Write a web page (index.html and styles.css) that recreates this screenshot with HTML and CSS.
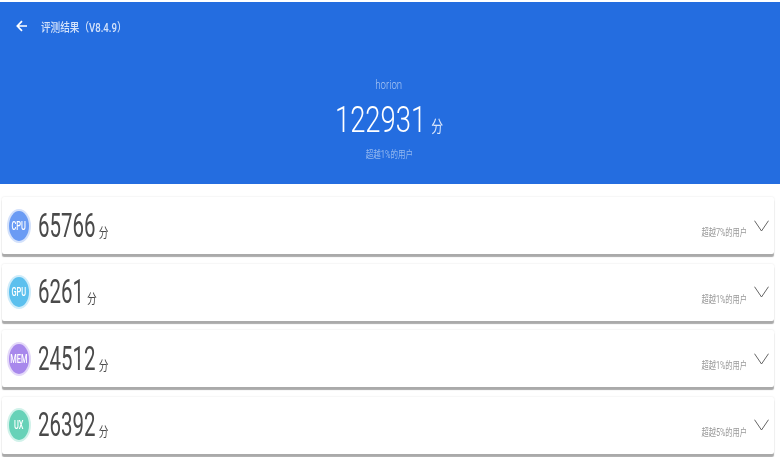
FILE: index.html
```html
<!DOCTYPE html>
<html lang="zh-CN">

<head>
    <meta charset="UTF-8">
    <meta name="viewport" content="width=device-width, initial-scale=1.0">
    <title>评测结果</title>
    <link rel="stylesheet" href="styles.css">
</head>

<body>
    <header class="summary">
        <div class="topbar">
            <svg class="back-icon" width="12" height="12" viewBox="0 0 12 12">
                <path d="M11 6H1.5M6 1.2 1.3 6 6 10.8" fill="none" stroke="#fff" stroke-width="1.7"/>
            </svg>
            <span class="topbar-title">评测结果（V8.4.9）</span>
        </div>
        <div class="device">horion</div>
        <div class="total"><span class="total-num">122931</span><span class="total-unit">分</span></div>
        <div class="total-rank">超越1%的用户</div>
    </header>

    <main class="cards">
        <div class="card">
            <div class="badge badge-cpu"><span>CPU</span></div>
            <div class="score"><span class="score-num">65766</span><span class="score-unit">分</span></div>
            <div class="rank">超越7%的用户</div>
            <svg class="chevron" width="15" height="12" viewBox="0 0 15 12"><path d="M.5.7 7.5 11 14.5.7" fill="none" stroke="#555" stroke-width=".9"/></svg>
        </div>
        <div class="card">
            <div class="badge badge-gpu"><span>GPU</span></div>
            <div class="score"><span class="score-num">6261</span><span class="score-unit">分</span></div>
            <div class="rank">超越1%的用户</div>
            <svg class="chevron" width="15" height="12" viewBox="0 0 15 12"><path d="M.5.7 7.5 11 14.5.7" fill="none" stroke="#555" stroke-width=".9"/></svg>
        </div>
        <div class="card">
            <div class="badge badge-mem"><span>MEM</span></div>
            <div class="score"><span class="score-num">24512</span><span class="score-unit">分</span></div>
            <div class="rank">超越1%的用户</div>
            <svg class="chevron" width="15" height="12" viewBox="0 0 15 12"><path d="M.5.7 7.5 11 14.5.7" fill="none" stroke="#555" stroke-width=".9"/></svg>
        </div>
        <div class="card">
            <div class="badge badge-ux"><span>UX</span></div>
            <div class="score"><span class="score-num">26392</span><span class="score-unit">分</span></div>
            <div class="rank">超越5%的用户</div>
            <svg class="chevron" width="15" height="12" viewBox="0 0 15 12"><path d="M.5.7 7.5 11 14.5.7" fill="none" stroke="#555" stroke-width=".9"/></svg>
        </div>
    </main>
</body>

</html>
```

FILE: styles.css
```css
html,
body {
    margin: 0;
    height: 457px;
    overflow: hidden;
    background: #fff;
    font-family: Roboto, "Noto Sans CJK SC", sans-serif;
}

.summary {
    margin-top: 2px;
    height: 182px;
    background: #246de0;
    color: #fff;
    text-align: center;
    display: flex;
    flex-direction: column;
    align-items: center;
    filter: blur(.35px);
}

.topbar {
    align-self: stretch;
    display: flex;
    align-items: center;
    height: 18px;
    margin-top: 15px;
    padding-left: 16px;
    gap: 13px;
}

.topbar-title {
    font-size: 12px;
    font-weight: 500;
    color: #d5e3fa;
    transform: scaleX(.8);
    transform-origin: left center;
}

.device {
    margin-top: 43px;
    margin-right: 3px;
    font-size: 12px;
    line-height: 14px;
    color: #a9c6f3;
    font-weight: 300;
    transform: scaleX(.8);
}

.total {
    margin-top: 8px;
    margin-right: 2px;
    height: 40px;
    display: flex;
    align-items: baseline;
    gap: 7px;
    transform: scaleX(.74);
}

.total-num {
    font-size: 37px;
    line-height: 40px;
    font-weight: 300;
}

.total-unit {
    font-size: 16px;
    color: #dbe7fb;
}

.total-rank {
    margin-top: 8px;
    margin-right: 2px;
    font-size: 10px;
    line-height: 14px;
    color: #93b8f0;
    transform: scaleX(.75);
}

.cards {
    margin: 13px 6px 0 2px;
    display: flex;
    flex-direction: column;
    gap: 9.5px;
    filter: blur(.35px);
}

.card {
    height: 57px;
    display: flex;
    align-items: center;
    background: #fff;
    border-radius: 2px;
    box-shadow: 0 3px 1px #aaa, 0 0 2px rgba(0, 0, 0, .12);
    padding-left: 7px;
    padding-right: 5px;
}

.badge {
    width: 20px;
    height: 30px;
    border-radius: 50%;
    flex: none;
    display: flex;
    align-items: center;
    justify-content: center;
    color: #fff;
    font-size: 12px;
    font-weight: 500;
}

.badge span {
    transform: scaleX(.62);
}

.badge-cpu {
    background: #6a9bf4;
    box-shadow: 0 0 0 2px #d3e1fb;
}

.badge-gpu {
    background: #5cc0ee;
    box-shadow: 0 0 0 2px #cfecfa;
}

.badge-mem {
    background: #a888ec;
    box-shadow: 0 0 0 2px #e4d9f9;
}

.badge-ux {
    background: #67d2b8;
    box-shadow: 0 0 0 2px #d1f2ea;
}

.score {
    margin-left: 9px;
    display: flex;
    align-items: baseline;
    gap: 5px;
    color: #4a4a4a;
    transform: scaleX(.62);
    transform-origin: left center;
}

.score-num {
    font-size: 33px;
    line-height: 40px;
}

.score-unit {
    font-size: 13px;
    transform: scaleX(1.21);
    transform-origin: left center;
}

.rank {
    margin-left: auto;
    margin-top: 12px;
    font-size: 10.5px;
    color: #999;
    transform: scaleX(.69);
    transform-origin: right center;
}

.chevron {
    flex: none;
    margin-left: 7px;
}
```
